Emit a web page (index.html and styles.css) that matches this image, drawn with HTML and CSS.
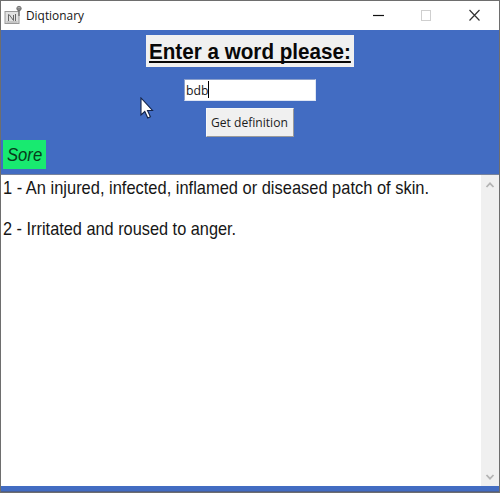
FILE: index.html
```
<!DOCTYPE html>
<html lang="en">
<head>
<meta charset="utf-8">
<title>Diqtionary</title>
<link rel="stylesheet" href="styles.css">
</head>
<body>
<div class="window">
  <header class="titlebar">
    <svg class="app-icon" width="18" height="20" viewBox="0 0 18 20" fill="none">
      <rect x="1" y="6.500" width="14" height="12" fill="#e2e2e2" stroke="#999"/>
      <path d="M4.500 9.500v6.500M4 10h1.500l4 5.500V10M11.500 9v7" stroke="#666" stroke-width="1"/>
      <path d="M2.500 17h11" stroke="#aaa"/>
      <circle cx="15" cy="3.500" r="2.200" fill="#aaa" stroke="#777"/>
      <path d="M15 5v6M13 4h4" stroke="#666" stroke-width="1.200"/>
    </svg>
    <span class="title"><span class="squeeze">Diqtionary</span></span>
    <svg class="controls" width="112" height="27" viewBox="0 0 112 27" fill="none">
      <path d="M1 13.500H12" stroke="#111" stroke-width="1.200"/>
      <rect x="49.500" y="8.500" width="9" height="10" stroke="#cfcfcf"/>
      <path d="M97.500 8l10 10.500M107.500 8l-10 10.500" stroke="#333" stroke-width="1.200"/>
    </svg>
  </header>
  <main class="form">
    <h1 class="heading"><span class="squeeze">Enter a word please:</span></h1>
    <div class="entry"><span class="squeeze">bdb</span><i class="caret"></i></div>
    <button class="lookup"><span class="squeeze">Get definition</span></button>
    <div class="word"><span class="squeeze">Sore</span></div>
  </main>
  <section class="results">
    <div class="text">
      <p><span class="squeeze">1 - An injured, infected, inflamed or diseased patch of skin.</span></p>
      <p class="second"><span class="squeeze">2 - Irritated and roused to anger.</span></p>
    </div>
    <div class="scrollbar">
      <svg width="10" height="8" viewBox="0 0 10 8"><path d="M1.500 6L5 2.300L8.500 6" fill="none" stroke="#b4b4b4" stroke-width="1.800"/></svg>
      <svg width="10" height="8" viewBox="0 0 10 8"><path d="M1.500 2L5 5.700L8.500 2" fill="none" stroke="#b4b4b4" stroke-width="1.800"/></svg>
    </div>
  </section>
  <footer class="strip"></footer>
</div>
<svg class="cursor" width="14" height="24" viewBox="0 0 14 24"><path d="M1 1V18L4.800 14.500L7.800 21L10.400 19.800L7.500 13.500H12.500Z" fill="#fff" stroke="#142448" stroke-width="1.100"/></svg>
</body>
</html>
```
FILE: styles.css
```
* { box-sizing: border-box; }
body {
  margin: 0;
  width: 500px;
  height: 500px;
  overflow: hidden;
  background: #fff;
  color: #161616;
}
.window {
  width: 500px;
  height: 493px;
  border: 1px solid #6e6e6e;
  display: flex;
  flex-direction: column;
  background: #426cc2;
}
.squeeze {
  display: inline-block;
  transform-origin: 0 50%;
  white-space: nowrap;
}
.titlebar {
  height: 29px;
  flex: none;
  display: flex;
  align-items: center;
  background: #fff;
  padding-left: 3px;
  font: 12.5px/20px "Open Sans", sans-serif;
}
.app-icon { margin-top: -2px; }
.title { margin-left: 4px; }
.title .squeeze { transform: scaleX(0.95); }
.controls { margin-left: auto; margin-right: 15px; }
.form {
  height: 144px;
  flex: none;
  display: flex;
  flex-direction: column;
  align-items: center;
  padding-top: 5px;
}
.heading {
  margin: 0 0 0 -1px;
  width: 208px;
  height: 32px;
  padding-left: 3px;
  background: #f0f0f0;
  color: #080808;
  font: bold 21.5px/34px "Liberation Sans", sans-serif;
}
.heading .squeeze {
  transform: scaleX(0.96);
  text-decoration: underline;
  text-decoration-thickness: 2px;
  text-underline-offset: 2px;
  text-decoration-skip-ink: none;
}
.entry {
  width: 132px;
  height: 22px;
  margin-top: 12px;
  border: 1px solid #8ba0cc;
  border-right-color: #dfe6f4;
  border-bottom-color: #dfe6f4;
  background: #fff;
  display: flex;
  align-items: center;
  padding-left: 1px;
  font: 13px/20px "Open Sans", sans-serif;
}
.entry .squeeze { transform: scaleX(0.94); margin-top: -1px; }
.caret { width: 1px; height: 17px; background: #000; margin-left: -2px; margin-top: -1px; }
.lookup {
  width: 88px;
  height: 29px;
  margin-top: 7px;
  padding: 0 0 1px 4px;
  border: 1px solid #f8f8f8;
  border-right-color: #9a9a9a;
  border-bottom-color: #9a9a9a;
  background: #f0f0f0;
  color: #1c1c1c;
  text-align: left;
  font: 13px/20px "Open Sans", sans-serif;
}
.lookup .squeeze { transform: scaleX(0.93); }
.word {
  align-self: flex-start;
  width: 43px;
  height: 29px;
  margin: 3px 0 0 2px;
  padding-left: 4px;
  background: #18ea70;
  color: #073c1a;
  font: italic 18.5px/30px "Liberation Sans", sans-serif;
}
.word .squeeze { transform: scaleX(0.9); }
.results {
  height: 312px;
  flex: none;
  display: flex;
  border-top: 1px solid #77839d;
  background: #fff;
}
.text {
  flex: 1;
  min-width: 0;
  padding-left: 2px;
  font: 18.5px/21px "Liberation Sans", sans-serif;
}
.text p { margin: 2px 0 0; height: 39px; }
.text .squeeze { transform: scaleX(0.889); }
.text .second .squeeze { transform: scaleX(0.882); }
.scrollbar {
  width: 18px;
  background: #f0f0f0;
  display: flex;
  flex-direction: column;
  justify-content: space-between;
  align-items: center;
  padding: 6px 0 5px;
}
.strip { flex: 1; border-bottom: 1px solid #4d5f8d; }
.cursor { position: absolute; left: 140px; top: 97px; }
```
